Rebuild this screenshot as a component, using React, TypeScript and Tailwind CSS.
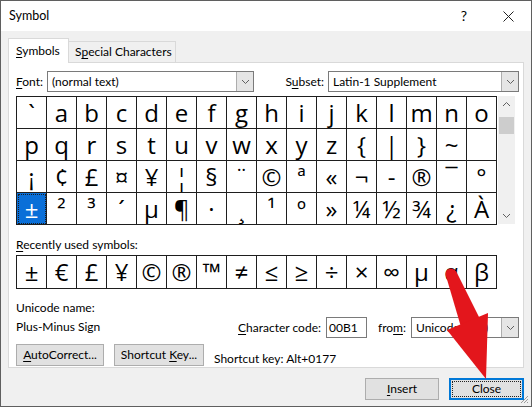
import React from "react";

const ROWS: string[][] = [
  ["`", "a", "b", "c", "d", "e", "f", "g", "h", "i", "j", "k", "l", "m", "n", "o"],
  ["p", "q", "r", "s", "t", "u", "v", "w", "x", "y", "z", "{", "|", "}", "~", ""],
  ["¡", "¢", "£", "¤", "¥", "¦", "§", "¨", "©", "ª", "«", "¬", "-", "®", "¯", "°"],
  ["±", "²", "³", "´", "µ", "¶", "·", "¸", "¹", "º", "»", "¼", "½", "¾", "¿", "À"],
];

const RECENT = ["±", "€", "£", "¥", "©", "®", "™", "≠", "≤", "≥", "÷", "×", "∞", "µ", "α", "β"];

function U({ children }: { children: React.ReactNode }) {
  return <span className="underline underline-offset-[2px] decoration-1">{children}</span>;
}

function Combo({ width, text }: { width: string; text: string }) {
  return (
    <div className={`${width} h-[21px] flex items-center bg-white border border-[#7a7a7a]`}>
      <span className="flex-1 pl-[4px] truncate">{text}</span>
      <div className="w-[17px] h-[19px] bg-[#e5e5e5] border-l border-[#adadad] flex items-center justify-center">
        <svg width="9" height="6" viewBox="0 0 9 6">
          <path d="M1 1 L4.5 4.5 L8 1" fill="none" stroke="#606060" strokeWidth="1" />
        </svg>
      </div>
    </div>
  );
}

function Button({ children, className = "" }: { children: React.ReactNode; className?: string }) {
  return (
    <div className={`h-[22px] flex items-center justify-center bg-[#e1e1e1] border border-[#adadad] ${className}`}>
      {children}
    </div>
  );
}

export default function App() {
  return (
    <div className="relative w-[532px] h-[407px] bg-[#f0f0f0] border border-[#5f5f5f] text-[12px] leading-[14px] text-black whitespace-nowrap font-['Lato',sans-serif] overflow-hidden">
      {/* title bar */}
      <div className="h-[30px] bg-white flex items-center">
        <span className="pl-[8px] text-[12.5px]">Symbol</span>
        <span className="ml-auto mr-[36px] text-[14px]">?</span>
        <svg width="11" height="11" viewBox="0 0 11 11" className="mr-[17px]">
          <path d="M0.5 0.5 L10.5 10.5 M10.5 0.5 L0.5 10.5" stroke="#222" strokeWidth="1" />
        </svg>
      </div>

      <div className="px-[7px] pt-[7px]">
        {/* tabs */}
        <div className="flex items-end h-[24px]">
          <div className="relative z-10 w-[61px] h-[25px] -mb-px bg-white border border-b-0 border-[#d9d9d9] flex items-center pl-[7px]">
            <span>
              <U>S</U>ymbols
            </span>
          </div>
          <div className="w-[107px] h-[21px] bg-[#f0f0f0] border border-l-0 border-b-0 border-[#d9d9d9] flex items-center pl-[6px]">
            <span>
              S<U>p</U>ecial Characters
            </span>
          </div>
        </div>

        {/* panel */}
        <div className="w-[516px] h-[306px] bg-white border border-[#d9d9d9] pl-[7px] pr-[4px] pt-[8px]">
          <div className="flex items-center h-[21px]">
            <span className="w-[31px]">
              <U>F</U>ont:
            </span>
            <Combo width="w-[207px]" text="(normal text)" />
            <span className="ml-auto mr-[4px]">
              S<U>u</U>bset:
            </span>
            <Combo width="w-[191px]" text="Latin-1 Supplement" />
          </div>

          {/* character grid */}
          <div className="flex mt-[4px]">
            <div className="border-l border-t border-[#1e1e1e]">
              {ROWS.map((row, r) => (
                <div key={r} className="flex">
                  {row.map((ch, c) => {
                    const sel = r === 3 && c === 0;
                    return (
                      <div
                        key={c}
                        className={`w-[30px] h-[32px] border-r border-b border-[#1e1e1e] flex items-center justify-center text-[24px] font-['Open_Sans',sans-serif] ${
                          sel ? "bg-[#0a6fd8] text-white outline outline-1 outline-dotted outline-[#1d1d1d] -outline-offset-2" : ""
                        }`}
                      >
                        {ch}
                      </div>
                    );
                  })}
                </div>
              ))}
            </div>
            <div className="w-[17px] ml-px h-[128px] bg-[#f0f0f0] flex flex-col items-center">
              <div className="h-[16px] flex items-center">
                <svg width="9" height="6" viewBox="0 0 9 6">
                  <path d="M1 5 L4.5 1.5 L8 5" fill="none" stroke="#606060" strokeWidth="1" />
                </svg>
              </div>
              <div className="w-[15px] h-[17px] mt-[5px] bg-[#cdcdcd]" />
              <div className="mt-auto h-[16px] flex items-center">
                <svg width="9" height="6" viewBox="0 0 9 6">
                  <path d="M1 1 L4.5 4.5 L8 1" fill="none" stroke="#606060" strokeWidth="1" />
                </svg>
              </div>
            </div>
          </div>

          <div className="mt-[13px] h-[14px]">
            <U>R</U>ecently used symbols:
          </div>
          <div className="mt-[3px] flex w-fit border-l border-t border-[#1e1e1e]">
            {RECENT.map((ch, i) => (
              <div
                key={i}
                className="w-[30px] h-[33px] border-r border-b border-[#1e1e1e] flex items-center justify-center text-[24px] font-['Open_Sans',sans-serif]"
              >
                {ch}
              </div>
            ))}
          </div>

          {/* info */}
          <div className="flex mt-[12px]">
            <div className="w-[232px]">
              <div className="h-[14px]">Unicode name:</div>
              <div className="h-[14px] mt-[5px]">Plus-Minus Sign</div>
            </div>
            <div className="flex items-center self-end -mb-[4px]">
              <span>
                <U>C</U>haracter code:
              </span>
              <div className="ml-[5px] w-[41px] h-[21px] border border-[#7a7a7a] flex items-center pl-[2px]">00B1</div>
              <span className="ml-[11px]">
                fro<U>m</U>:
              </span>
              <div className="ml-[5px]">
                <Combo width="w-[108px]" text="Unicode (hex)" />
              </div>
            </div>
          </div>

          <div className="flex items-center mt-[10px]">
            <Button className="w-[88px]">
              <span>
                <U>A</U>utoCorrect...
              </span>
            </Button>
            <Button className="w-[90px] ml-[10px]">
              <span>
                Shortcut <U>K</U>ey...
              </span>
            </Button>
            <span className="ml-[10px] mt-[8px]">Shortcut key: Alt+0177</span>
          </div>
        </div>

        {/* bottom buttons */}
        <div className="flex justify-end mt-[10px]">
          <Button className="w-[74px]">
            <span>
              <U>I</U>nsert
            </span>
          </Button>
          <div className="ml-[10px] w-[75px] h-[22px] border-2 border-[#0078d7] bg-[#e1e1e1] flex items-center justify-center">
            <div className="w-[67px] h-[14px] outline outline-1 outline-dotted outline-[#222] flex items-center justify-center">
              Close
            </div>
          </div>
        </div>
      </div>

      {/* resize grip */}
      <svg width="10" height="10" viewBox="0 0 10 10" className="absolute right-[2px] bottom-[2px]">
        <path d="M9 2 L2 9 M9 5 L5 9 M9 8 L8 9" stroke="#9a9a9a" strokeWidth="1" />
      </svg>

      {/* red annotation arrow */}
      <svg width="532" height="407" className="absolute left-0 top-0 pointer-events-none">
        <circle cx="450" cy="273" r="5.5" fill="#e3161c" />
        <polygon points="445,275 455,270 479,318 460,326" fill="#e3161c" />
        <polygon points="446,329 487,312 485,378" fill="#e3161c" />
      </svg>
    </div>
  );
}
